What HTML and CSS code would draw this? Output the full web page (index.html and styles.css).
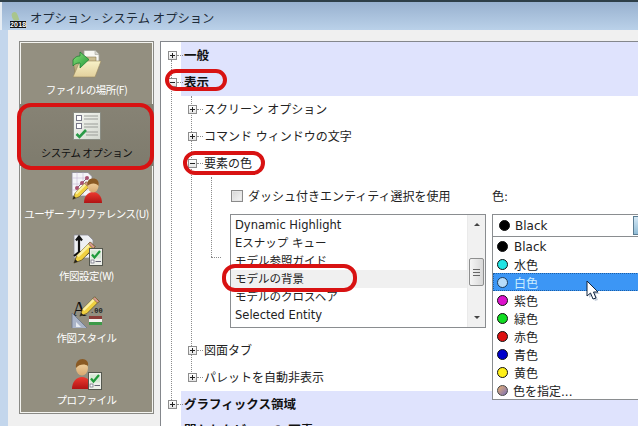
FILE: index.html
```html
<!DOCTYPE html>
<html lang="ja">
<head>
<meta charset="utf-8">
<title>オプション - システム オプション</title>
<link rel="stylesheet" href="styles.css">
</head>
<body>
<svg class="defs" width="0" height="0" aria-hidden="true">
  <defs>
    <linearGradient id="gold" x1="0" y1="0" x2="0" y2="1"><stop offset="0" stop-color="#f8f2c8"/><stop offset="1" stop-color="#e2d09c"/></linearGradient>
    <linearGradient id="tan" x1="0" y1="0" x2="0" y2="1"><stop offset="0" stop-color="#d0c296"/><stop offset="1" stop-color="#ae9e70"/></linearGradient>
    <linearGradient id="arrow" x1="0" y1="0" x2="1" y2="1"><stop offset="0" stop-color="#8fe07a"/><stop offset="1" stop-color="#1f9a3a"/></linearGradient>
    <linearGradient id="card" x1="0" y1="0" x2="1" y2="1"><stop offset="0" stop-color="#f6f8f2"/><stop offset="1" stop-color="#d4d8d0"/></linearGradient>
    <linearGradient id="red" x1="0" y1="0" x2="0" y2="1"><stop offset="0" stop-color="#ee3a30"/><stop offset="1" stop-color="#b01414"/></linearGradient>
    <linearGradient id="skin" x1="0" y1="0" x2="0" y2="1"><stop offset="0" stop-color="#f5d9a8"/><stop offset="1" stop-color="#d7a870"/></linearGradient>
    <symbol id="pencil" viewBox="0 0 24 24">
      <path d="M1 23 4 15 18 1 23 6 9 20Z" fill="#f0d040" stroke="#5a4a20" stroke-width=".8"/>
      <path d="M4 15 18 1 20 3 6 17Z" fill="#fbf0a0"/>
      <path d="M16 3 21 8 23 6 18 1Z" fill="#d89a90" stroke="#5a4a20" stroke-width=".6"/>
      <path d="M1 23 2.4 19 5 21.6Z" fill="#222"/>
    </symbol>
    <symbol id="checkdoc" viewBox="0 0 14 18">
      <rect x=".5" y=".5" width="13" height="17" fill="#eef0ea" stroke="#55584f"/>
      <rect x="2" y="2.5" width="10" height="8" fill="#d6e8d4"/>
      <path d="M3 6.5 5.5 9.5 11 3" fill="none" stroke="#1f9a3a" stroke-width="2.2"/>
      <rect x="2" y="12" width="3" height="3" fill="#fff" stroke="#667" stroke-width=".7"/>
      <path d="M6.5 13.5H12" stroke="#667" stroke-width="1"/>
    </symbol>
  </defs>
</svg>
<div class="window">
  <header class="titlebar">
    <span class="appicon"><span class="leaf"></span><span class="year">2018</span></span>
    <span class="title">オプション - システム オプション</span>
  </header>
  <div class="client">
    <nav class="sidebar">
      <a class="side-item">
        <svg class="side-icon" viewBox="0 0 32 32">
          <path d="M13 2.500H24L28 6.500V18H13Z" fill="#f7f7f2" stroke="#a4a49a" stroke-width=".8"/>
          <path d="M24 2.500V6.500H28" fill="#d8d8d0" stroke="#a4a49a" stroke-width=".6"/>
          <path d="M2 11H9L11 9H25V26H4Z" fill="url(#tan)" stroke="#8a7c54" stroke-width=".6"/>
          <path d="M9 13H30L24 29H2Z" fill="url(#gold)" stroke="#9a8a60" stroke-width=".6"/>
          <path d="M2 12C4 9 6 8 9 8V4L18 11.500 9 20V15C6 15 3.500 16 2 18Z" fill="url(#arrow)" stroke="#167a2e" stroke-width=".7"/>
        </svg>
        <span>ファイルの場所(F)</span>
      </a>
      <a class="side-item selected">
        <svg class="side-icon" viewBox="0 0 32 32">
          <rect x="2.500" y="2.500" width="27" height="27" fill="url(#card)" stroke="#8a8d84"/>
          <g fill="#fff" stroke="#778">
            <rect x="5.500" y="5.500" width="5" height="5"/>
            <rect x="5.500" y="13.500" width="5" height="5"/>
          </g>
          <path d="M13 6H27M13 9H27M13 14H27M13 17H27M15 22H27M15 25H27" stroke="#9a9d98" stroke-width="1"/>
          <path d="M5.500 24 8.500 27 15 20" fill="none" stroke="#2a9a48" stroke-width="2.600"/>
        </svg>
        <span>システム オプション</span>
      </a>
      <a class="side-item">
        <svg class="side-icon" viewBox="0 0 32 32">
          <path d="M1 .5H17L21 4.500V24H1Z" fill="#f4f4f8" stroke="#8a8a94" stroke-width=".8"/>
          <path d="M1 6H17M1 12H17M1 18H17M6 .5V24M12 .5V24" stroke="#c6b8d4" stroke-width=".6"/>
          <path d="M5 17 11 11 16 6" stroke="#806078" stroke-width="1"/>
          <circle cx="6" cy="16" r="2" fill="#a85070"/><circle cx="11" cy="11" r="2" fill="#a85070"/><circle cx="16" cy="6" r="2" fill="#a85070"/>
          <use href="#pencil" x="1" y="9" width="19" height="19"/>
          <path d="M13 31C13 24 17 20 22 20S31 24 31 31Z" fill="url(#red)"/>
          <ellipse cx="22" cy="14" rx="5.500" ry="6.500" fill="url(#skin)"/>
          <path d="M16.500 14C15.500 9 18 6.500 22 6.500S28.500 9 27.500 14C26 10.500 19 10.500 16.500 14Z" fill="#8a5a24"/>
        </svg>
        <span>ユーザー プリファレンス(U)</span>
      </a>
      <a class="side-item">
        <svg class="side-icon" viewBox="0 0 32 32">
          <path d="M3 1H17L22 6V24H3Z" fill="#eef0f4" stroke="#8a8a94" stroke-width=".8"/>
          <path d="M8 18V4M5 6.500 8 2.500 11 6.500M8 18H16M14 15 18 18 14 21M8 18 3 22" fill="none" stroke="#111" stroke-width="2.200"/>
          <use href="#pencil" x="2" y="7" width="23" height="23"/>
          <use href="#checkdoc" x="18" y="14" width="14" height="18"/>
        </svg>
        <span>作図設定(W)</span>
      </a>
      <a class="side-item">
        <svg class="side-icon" viewBox="0 0 32 32">
          <text class="big-a" x="1" y="20">A</text>
          <path d="M1 34 1 17 18 34Z" fill="#aab4c8" stroke="#6a7488" stroke-width=".8"/>
          <path d="M5 31 5 26 10 31Z" fill="#e8ecf2"/>
          <use href="#pencil" x="8" y="0" width="21" height="21"/>
          <text class="tiny-num" x="19" y="17">.00</text>
          <rect x="18" y="20" width="13" height="3" fill="#8a3c38"/>
          <rect x="18" y="23" width="13" height="3" fill="#f4f4f0"/>
          <rect x="18" y="26" width="13" height="3" fill="#3c9a48"/>
        </svg>
        <span>作図スタイル</span>
      </a>
      <a class="side-item">
        <svg class="side-icon" viewBox="0 0 32 32">
          <path d="M1 31C1 24 5 19 11 19S21 24 21 31Z" fill="url(#red)"/>
          <ellipse cx="11" cy="10" rx="6" ry="7.500" fill="url(#skin)"/>
          <path d="M5 10C4 4 8 1 11.500 1S18 4 17 8C14 5.500 8 6 5 10Z" fill="#8a5a24"/>
          <use href="#checkdoc" x="17" y="14" width="14" height="18"/>
        </svg>
        <span>プロファイル</span>
      </a>
    </nav>
    <main class="tree">
      <span class="guide g-root"></span>
      <span class="guide g-display"></span>
      <span class="guide g-color"></span>
      <span class="guide g-color-end"></span>

      <div class="row top shaded"><i class="box plus"></i><b class="dash"></b><span class="label">一般</span></div>
      <div class="row top shaded"><i class="box minus"></i><b class="dash"></b><span class="label">表示</span></div>
      <div class="row sub"><i class="box plus"></i><b class="dash"></b><span>スクリーン オプション</span></div>
      <div class="row sub"><i class="box plus"></i><b class="dash"></b><span>コマンド ウィンドウの文字</span></div>
      <div class="row sub"><i class="box minus"></i><b class="dash"></b><span>要素の色</span></div>

      <section class="panel">
        <label class="check"><i class="checkbox"></i><span>ダッシュ付きエンティティ選択を使用</span></label>
        <span class="color-label">色:</span>
        <div class="listbox">
          <ul class="entries">
            <li>Dynamic Highlight</li>
            <li>Eスナップ キュー</li>
            <li>モデル参照ガイド</li>
            <li class="current">モデルの背景</li>
            <li>モデルのクロスヘア</li>
            <li>Selected Entity</li>
          </ul>
          <div class="scrollbar">
            <span class="tri up"></span>
            <span class="thumb"><i></i></span>
            <span class="tri down"></span>
          </div>
        </div>
        <div class="combo">
          <div class="combo-field"><i class="dot c-black"></i><span>Black</span><b class="combo-btn"></b></div>
          <ul class="drop">
            <li><i class="dot c-black"></i><span class="latin">Black</span></li>
            <li><i class="dot c-cyan"></i><span>水色</span></li>
            <li class="hot"><i class="dot c-white"></i><span>白色</span></li>
            <li><i class="dot c-magenta"></i><span>紫色</span></li>
            <li><i class="dot c-green"></i><span>緑色</span></li>
            <li><i class="dot c-red"></i><span>赤色</span></li>
            <li><i class="dot c-blue"></i><span>青色</span></li>
            <li><i class="dot c-yellow"></i><span>黄色</span></li>
            <li class="custom"><i class="dot c-custom"></i><span>色を指定...</span></li>
          </ul>
        </div>
      </section>

      <div class="row sub"><i class="box plus"></i><b class="dash"></b><span>図面タブ</span></div>
      <div class="row sub"><i class="box plus"></i><b class="dash"></b><span>パレットを自動非表示</span></div>
      <div class="row top shaded"><i class="box plus"></i><b class="dash"></b><span class="label">グラフィックス領域</span></div>
      <div class="row top shaded peek"><span class="label offset">開かれたビューの 画素</span></div>
    </main>
  </div>
</div>

<span class="mark mark-display"></span>
<span class="mark mark-system"></span>
<span class="mark mark-color"></span>
<span class="mark mark-model"></span>
<svg class="cursor" viewBox="0 0 14 22" width="14" height="22">
  <path d="M2 2V17L5.500 14 8 20 11 19 8.500 13H13Z" fill="#8d9fb8" opacity=".5" transform="translate(1 1)"/>
  <path d="M1 1V16L4.500 13 7 19 10 18 7.500 12H12Z" fill="#fff" stroke="#10243f" stroke-width="1"/>
</svg>
</body>
</html>
```

FILE: styles.css
```css
* { box-sizing: border-box; }
html, body { margin: 0; padding: 0; }
body {
  width: 638px;
  height: 426px;
  overflow: hidden;
  position: relative;
  background: #c3d6ec;
  font-family: "DejaVu Sans", "Noto Sans CJK JP", sans-serif;
  font-size: 12px;
  color: #222;
}
ul { list-style: none; margin: 0; padding: 0; }
.defs { position: absolute; }

.window { display: flex; flex-direction: column; height: 426px; border-top: 2px solid #2e3f48; }

.titlebar {
  flex: none;
  height: 28px;
  display: flex;
  align-items: center;
  padding-left: 10px;
  gap: 4px;
  background: linear-gradient(#98b1cf, #bad1e9);
  box-shadow: inset 2px 0 0 #e6edf4;
}
.appicon { width: 16px; height: 20px; display: flex; flex-direction: column; justify-content: flex-end; margin-top: 4px; }
.leaf { width: 6px; height: 9px; margin-left: 2px; background: #a9c58c; border-radius: 50% 50% 0 50%; transform: rotate(-20deg); }
.year {
  height: 7px;
  background: #111;
  color: #fff;
  font: bold 7px/7px "Liberation Sans", sans-serif;
  text-align: center;
  letter-spacing: .2px;
}
.title {
  font: 12.300px/16px "Noto Sans CJK JP", sans-serif;
  color: #1e2c3a;
  margin-top: 3px;
}

.client {
  flex: 1;
  min-height: 0;
  margin-left: 8px;
  padding: 11px 0 0 11px;
  background: #f0f0f0;
  display: flex;
  align-items: flex-start;
  gap: 6px;
}

.sidebar {
  flex: none;
  width: 135px;
  height: 373px;
  background: #938f80;
  border: 1px solid #8a8a86;
  box-shadow: inset 0 0 0 1px #f4f4f0;
  display: flex;
  flex-direction: column;
}
.side-item {
  height: 62px;
  flex: none;
  display: flex;
  flex-direction: column;
  align-items: center;
  padding-top: 6px;
  gap: 2px;
  color: #fff;
  font: 10.500px/16px "Noto Sans CJK JP", sans-serif;
  letter-spacing: -.5px;
  white-space: nowrap;
}
.side-item.selected { background: linear-gradient(#878375, #7e7b6d); color: #111; }
.side-item.selected span { margin-top: 1px; }
.side-icon { width: 32px; height: 32px; flex: none; overflow: hidden; }
.big-a { font: 20px "Liberation Serif", serif; fill: #111; letter-spacing: 0; }
.tiny-num { font: bold 7px "Liberation Mono", monospace; fill: #222; letter-spacing: 0; }

.tree {
  flex: 1;
  min-width: 0;
  height: 400px;
  position: relative;
  background: #fff;
  border-top: 1px solid #84878c;
  border-left: 1px solid #84878c;
}
.guide { position: absolute; border: 0 dotted #8c8c8c; z-index: 1; }
.g-root { left: 10px; top: 18px; height: 340px; border-left-width: 1px; }
.g-display { left: 30px; top: 54px; height: 280px; border-left-width: 1px; }
.g-color { left: 50px; top: 135px; height: 80px; border-left-width: 1px; }
.g-color-end { left: 50px; top: 215px; width: 10px; border-top-width: 1px; }

.row { height: 27px; display: flex; align-items: center; position: relative; font-size: 12px; color: #222; white-space: nowrap; }
.row > span { margin-top: -3px; }
.row.shaded { background: linear-gradient(to right, #fff 20px, #dfe3fd 20px); }
.row.top { padding-left: 7px; }
.row.sub { padding-left: 27px; }
.row.peek > span { margin-top: -4px; }
.label { font-weight: 700; font-size: 12.500px; color: #111; }
.label.offset { margin-left: 16px; }
.box {
  width: 9px;
  height: 9px;
  flex: none;
  border: 1px solid #8d8d8d;
  background: linear-gradient(#fff, #e4e4e4);
  position: relative;
  z-index: 2;
}
.box::before { content: ""; position: absolute; left: 1px; top: 3px; width: 5px; height: 1px; background: #222; }
.plus::after { content: ""; position: absolute; left: 3px; top: 1px; width: 1px; height: 5px; background: #222; }
.dash { width: 6px; margin-right: 1px; border-top: 1px dotted #8c8c8c; flex: none; }

.panel {
  height: 160px;
  padding-left: 69px;
  display: grid;
  grid-template-columns: 256px 146px;
  grid-template-rows: 37px 114px;
  column-gap: 6px;
  align-items: center;
  position: relative;
}
.check { display: flex; align-items: center; gap: 5px; white-space: nowrap; padding-left: 1px; }
.checkbox { width: 12px; height: 12px; border: 1px solid #8a8a8a; background: linear-gradient(135deg, #d5d5d5, #f6f6f6); box-shadow: inset 0 0 0 1px #e6e6e6; }
.color-label { justify-self: start; }

.listbox {
  height: 114px;
  border: 1px solid #8a8d90;
  display: flex;
  align-self: start;
  background: #fff;
  overflow: hidden;
}
.entries { flex: 1; padding-top: 1px; font-size: 11.500px; line-height: 18px; color: #222; }
.entries li { padding-left: 4px; height: 18px; white-space: nowrap; }
.entries li.current { background: #f0f0f0; }
.scrollbar {
  flex: none;
  width: 18px;
  background: #f1f1f1;
  display: flex;
  flex-direction: column;
  align-items: center;
  padding: 8px 0;
  border-left: 1px solid #eaeaea;
}
.tri { width: 0; height: 0; border-left: 3px solid transparent; border-right: 3px solid transparent; }
.tri.up { border-bottom: 3px solid #444; }
.tri.down { border-top: 3px solid #444; margin-top: auto; }
.thumb {
  margin-top: 32px;
  width: 15px;
  height: 28px;
  background: linear-gradient(to right, #f6f6f6, #d8d8d8);
  border: 1px solid #8e8f8f;
  border-radius: 2px;
  display: flex;
  align-items: center;
  justify-content: center;
}
.thumb i { width: 7px; height: 7px; border-top: 1px solid #666; border-bottom: 1px solid #666; background: linear-gradient(#666, #666) center / 100% 1px no-repeat; }

.combo { position: relative; align-self: start; height: 23px; z-index: 3; }
.combo-field {
  height: 23px;
  width: 150px;
  background: #fff;
  border: 1px solid #8a8d90;
  display: flex;
  align-items: center;
  padding-left: 6px;
  gap: 5px;
  font-size: 12px;
  position: relative;
}
.combo-btn {
  position: absolute;
  left: 140px;
  top: 1px;
  width: 9px;
  height: 19px;
  background: linear-gradient(#d4e8f5, #90bcd6);
  border: 1px solid #5a7c92;
}
.drop {
  position: absolute;
  top: 23px;
  left: 0;
  width: 150px;
  height: 163px;
  background: #fff;
  border: 1px solid #8a8d90;
  border-top: 0;
}
.drop li { height: 18px; display: flex; align-items: center; padding-left: 4px; gap: 6px; font-size: 12px; color: #222; }
.drop .latin { margin-top: 2px; }
.drop li.hot { background: #3c96f5; color: #cdeeff; outline: 1px dotted #1d5fa5; outline-offset: -1px; }
.drop li.custom { gap: 5px; }
.dot { width: 11px; height: 11px; border-radius: 50%; border: 1px solid #111; flex: none; display: block; }
.c-black { background: #000; }
.c-cyan { background: #22e4e4; }
.c-white { background: #b8dcfa; border-color: #1c3c5c; }
.c-magenta { background: #dd11cc; }
.c-green { background: #11dd22; }
.c-red { background: #dd1111; }
.c-blue { background: #0000cc; }
.c-yellow { background: #fff01a; }
.c-custom { background: linear-gradient(135deg, #e8b070, #7a70b8); border-color: #444; }

.mark { position: absolute; border: 4px solid #d81212; z-index: 5; pointer-events: none; }
.mark-display { left: 165px; top: 69px; width: 62px; height: 22px; border-radius: 11px; }
.mark-system { left: 17px; top: 103px; width: 137px; height: 67px; border-radius: 14px; }
.mark-color { left: 183px; top: 151px; width: 82px; height: 24px; border-radius: 12px; }
.mark-model { left: 222px; top: 264px; width: 135px; height: 28px; border-radius: 13px; }
.cursor { position: absolute; left: 586px; top: 280px; z-index: 6; }
```
